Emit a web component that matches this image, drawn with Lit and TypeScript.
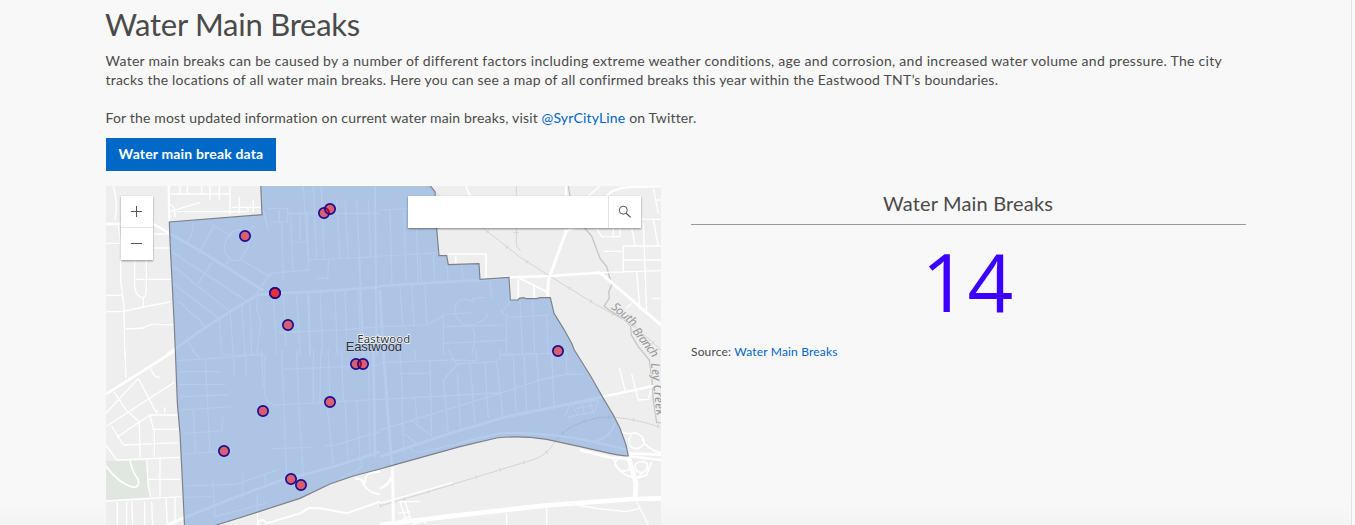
import { LitElement, html, svg, css } from "lit";
import { customElement } from "lit/decorators.js";

type Road = [d: string, width: number];

/* Map space is three units per pixel; each quadrant has its own origin. */
const NW: Road[] = [
  ["M206 18 208 126M18 132 160 132 M160 132 208 160", 7],
  ["M18 190H64M40 18Q56 80 44 120M55 130 62 200 62 300 72 380 74 525M18 346H64M18 395H68L130 381 210 366M104 240V320Q108 352 130 353 Q140 350 139 320V240M108 298H214M160 204H210M130 353V381M76 447 130 444Q155 428 180 434H222M160 162H206", 4],
  ["M212 42H390M390 18V104M208 75Q225 72 225 110M208 95 300 68M230 95H440M240 18V42M262 18V42M305 18V42M330 18V60M358 18V60M418 50V100M460 60V96M395 82H482M444 82V96", 4],
  ["M208 160 300 212 440 300 490 332M200 525 315 443 410 382 470 346 520 340 660 334 840 321", 8],
  ["M470 346Q480 320 512 280L625 270M216 215 432 358M222 260 390 395M222 312 355 414M230 365 Q250 370 262 390 L300 420 312 440M335 248 295 310M296 222 340 140M278 128Q282 160 262 184M338 135 390 165M395 160Q365 190 375 215 390 250 420 240 L445 200 Q450 160 420 150 395 152 390 162M375 260 388 240M424 240 510 290M450 145 462 138", 4],
  ["M490 90 505 150M505 85H563V126H508M538 90V126M565 100H840M572 100 578 270M600 103V180M622 95 626 270M572 186H622M627 240 840 230M545 130 550 300M650 295H683L686 240M610 18 625 240M640 18 650 235M664 18 672 235M710 60 720 235M735 60 745 235M770 60 778 232M805 60 812 230M550 345 558 500M590 345 600 525M660 335 668 525M705 332 712 525M735 330 740 480M775 328 780 470M475 350Q465 380 475 400L482 430 470 525M520 345 530 525M358 414 365 525M390 390 400 525M425 372 435 525M450 360 455 525M535 458 720 450 840 440M265 485 290 525", 3.5],
  ["M625 340 630 525M825 18 830 525M778 232 790 525", 6],
];
const NE: Road[] = [
  ["M0 90 165 82M0 228 177 218M30 90 36 318M72 90 78 310M108 90 115 315M0 440 140 435 200 402 280 398M280 360 278 365Q250 355 240 360L225 380Q222 420 255 435 290 438 315 415L325 398M120 230 125 312M160 225 165 310M200 255 205 308M245 255 250 305M330 300 335 355M190 440 380 435M190 490 380 480M190 402V525M278 440Q290 480 275 525M380 398V525M360 390 380 412 510 405M360 395Q385 385 388 360M420 360 428 525M458 358 464 525M500 405 505 525M60 320 68 435M95 318 102 435M135 318 140 435M275 360Q290 350 315 353", 3.5],
  ["M0 318 300 300 388 292 510 288 660 278M0 330 10 525", 8],
  ["M660 278 843 435M560 150 505 300 503 350M552 155 590 140", 9],
  ["M558 18V48M680 48Q700 25 740 22L843 18", 7],
  ["M205 222H318V296M227 228V250M258 18Q262 35 272 48M415 298V352M418 294 500 335M462 318V355M388 292V360", 5],
  ["M720 48V170H665L650 145M730 280V198H843M755 145 765 195M790 130 800 400M820 25 835 100M820 120 835 198M730 240H843M670 214H730M780 118H843M700 145V168M815 355H843M770 275 780 390M660 278 843 272M740 385 755 370M830 60H843M625 48 660 18", 4],
];
const SW: Road[] = [
  ["M18 132 130 62 225 2", 8],
  ["M150 55 165 80 180 82M18 190 115 85M20 228 222 98M115 85 170 190M42 125 80 182 118 215M75 0 78 85M35 228 70 285 235 278M50 262 150 195H232M150 195 160 238H235M18 285 50 330 240 322M118 215 120 322M163 240V320M172 188V180M194 188V172M140 330 145 410 152 440M18 453 245 440M145 388H240M180 322V440M52 455V525M80 455V525M95 455 98 525M134 455V525M155 455 158 525M198 445 202 525M225 442V525", 4],
  ["M90 330Q92 355 115 390 120 412 100 412 55 400 18 348", 5],
  ["M228 32 385 22 490 12M235 65H362M235 103H377M240 140 388 134M240 180 395 170M250 250 365 243 370 195M248 312 400 303M275 0 300 25M316 28 330 308M280 180 286 305M402 20V75M438 15V75M485 0 490 115M495 15V140Q505 165 530 165L840 148M545 58 840 45M368 15H488M338 390 345 500 500 460M245 408 410 403 535 358M252 442 340 438M428 370V440M496 375V410M472 435V525M512 296 635 292M675 287H700L840 245M720 384Q770 365 785 350V330M590 0 596 160M545 0 560 380M640 0 640 160M662 0 660 160M680 160 702 355M596 165 610 378M735 150 745 342M770 148 780 335M685 0 690 155M725 0 730 155M805 0 810 325", 3.5],
  ["M200 525 380 452 540 392 700 350 840 306M820 0 825 320", 8],
  ["M765 385 785 390 Q800 430 840 432M840 365Q790 365 795 400M475 525V512L490 510 500 520 600 490 625 475H660L740 490 840 455", 6],
];
const SE: Road[] = [
  ["M0 320 210 250 380 200 520 172 670 140M10 0 35 345M38 350 40 525", 9],
  ["M670 140 820 108M0 415Q28 405 34 380", 7],
  ["M0 240 360 130 480 90 560 72H610M0 148 190 138 365 128M0 38 205 30M95 212 160 262M60 0 68 145M60 70H150M150 30 155 260M105 145 112 220M205 0 230 45 190 90 205 245M228 42 350 35M232 70 242 235M270 42 285 220M315 38 325 205M350 35Q370 20 355 0M365 15 560 8M350 38 368 195M400 15 408 185M432 12 440 185M470 12 480 175M515 10 522 170M560 8V72M290 0V32L210 30M105 0V28M65 145 72 310M70 250 110 280M90 290Q92 310 130 305L240 280M555 198 570 165 655 150 645 185 560 202M575 165 595 198M605 160 615 195M630 155 640 190M590 175 640 165", 4],
  ["M240 278 360 250Q500 245 640 275 690 265 705 220M640 275 745 300", 6],
  ["M725 245Q745 255 765 248 800 260 790 285 770 305 750 288 740 270 755 255M700 325Q715 375 760 382M705 345Q705 320 735 325 760 340 745 360 720 370 705 345M765 345Q775 330 800 338 808 355 790 368 765 370 765 345M790 365 770 385 800 375 815 335M785 265Q800 300 843 308", 5],
  ["M745 310 843 314M740 318 843 330M600 300 690 323 745 325", 8],
  ["M745 318 768 400 765 445", 14],
  ["M0 525 200 500 500 466 760 447 843 445", 14],
  ["M0 460 220 397M380 490V525M500 470V525M590 465 650 475 740 485 780 475M770 455 805 525M718 52 735 122M755 72 775 150 805 148 812 120M55 455H120M60 455 80 518M75 455 95 515M55 490 90 485M65 508 90 500M130 510 140 525M95 525 150 505", 4],
];

const BOUNDARY =
  "M482 10 486 104 208 126 211 205 216 300 222 420 226 510 232 670 240 760 246 880 254 1045 320 1045 350 1035 470 997 600 955 690 912 760 888 840 867 875 857 1080 800 1190 774Q1260 766 1340 778L1440 800 1530 820Q1570 828 1585 828L1578 795 1560 745 1540 705 1510 655 1470 585 1423 510 1415 490 1390 445 1362 400 1351 353 1320 353 1310 356 1278 356 1270 353 1258 355 1254 360 1231 360 1227 292 1140 298 1137 251 1045 254 1040 227 1017 227 1010 145 1005 35 985 10Z";

const BREAKS = [
  [324, 213], [330, 209], [245, 236], [275, 293], [275, 293], [288, 325], [356, 364],
  [363, 364], [558, 351], [330, 402], [263, 411], [224, 451], [291, 479], [301, 485],
];

const roads = (list: Road[], x: number, y: number) => svg`
  <g transform="translate(${x} ${y})">${list.map(([d, w]) => svg`<path d=${d} stroke-width=${w} />`)}</g>`;

@customElement("break-map")
class BreakMap extends LitElement {
  static styles = css`
    :host { display: block; position: relative; width: 555px; height: 339px; overflow: hidden; background: #eee; }
    .canvas { display: block; width: 555px; height: 339px; }
    .road { fill: none; stroke: #fff; stroke-linejoin: round; }
    .rail { fill: none; stroke: #d5d5d5; stroke-width: 3; }
    .tick { fill: none; stroke: #d5d5d5; stroke-width: 12; stroke-dasharray: 3 72; }
    .creek { fill: none; stroke: #c6c6c6; stroke-width: 4; }
    .area { fill: rgba(110, 154, 220, 0.5); stroke: #7c8088; stroke-width: 3.5; }
    .dot { fill: rgba(255, 0, 0, 0.52); stroke: #1c0a90; stroke-width: 5; }
    .river { font: italic 36px "Noto Sans", sans-serif; fill: #969696; stroke: #eee; stroke-width: 4; paint-order: stroke; }
    .name { font: 39px "Liberation Sans", sans-serif; fill: #2d3036; stroke: #d4def0; stroke-width: 2; paint-order: stroke; }
    .place { font: 34px "Noto Sans", sans-serif; fill: #30343a; stroke: #fff; stroke-width: 4; paint-order: stroke; }
    .zoom { position: absolute; left: 15px; top: 10px; width: 32px; display: grid; grid-template-rows: 31px 33px; background: #fff; box-shadow: 0 1px 2px rgba(0, 0, 0, 0.4); }
    .key { display: grid; place-items: center; padding: 0 1px 0 0; }
    .key + .key { border-top: 1px solid #e4e4e4; padding-bottom: 1px; }
    .search { position: absolute; left: 302px; top: 10px; width: 233px; height: 32px; display: flex; background: #fff; box-shadow: 0 1px 2px rgba(0, 0, 0, 0.45); }
    .field { flex: 1; }
    .go { width: 32px; border-left: 1px solid #e4e4e4; display: grid; place-items: center; padding-bottom: 1px; }
    .icon { display: block; fill: none; stroke: #555; }
  `;

  render() {
    const rail = "M982 18 1045 68 1150 145 1258 230 1360 295 1490 375 1600 435 1683 510M840 978 990 934 1280 845Q1335 835 1365 785 1400 730 1500 712 1570 705 1683 742";
    return html`
      <svg class="canvas" viewBox="18 18 1665 1017">
        <path d="M18 842H139L142 910 152 950 18 962Z" fill="#e0e7e0" />
        <path class="rail" d=${rail} />
        <path class="tick" d=${rail} />
        <path class="rail" d="M1249 18V195Q1250 205 1262 212M1241 158H1257" />
        <path class="creek" d="M1405 18 1412 60 1450 140 1475 168 1500 235 1520 260 1535 315 1526 335 1528 355 1512 378 1535 395 1575 420 1592 438 1594 465 1615 500 1648 540 1656 600 1660 660 1670 728H1683" />
        <g class="road">${roads(NW, 0, 0)}${roads(NE, 840, 0)}${roads(SW, 0, 510)}${roads(SE, 840, 510)}</g>
        <path class="area" d=${BOUNDARY} />
        <text class="river" transform="translate(1532 384) rotate(40)" textLength="88">South</text>
        <text class="river" transform="translate(1596 454) rotate(52)" textLength="102">Branch</text>
        <text class="river" transform="translate(1653 550) rotate(84)" textLength="158">Ley Creek</text>
        ${BREAKS.map(([x, y]) => svg`<circle class="dot" cx=${(x - 100) * 3} cy=${(y - 180) * 3} r="15.5" />`)}
        <text class="name" x="737" y="512" textLength="169">Eastwood</text>
        <text class="place" x="772" y="489" textLength="159">Eastwood</text>
      </svg>
      <div class="zoom">
        <div class="key"><svg class="icon" width="11" height="11"><path d="M5.5 0V11M0 5.5H11" /></svg></div>
        <div class="key"><svg class="icon" width="11" height="11"><path d="M0 5.5H11" /></svg></div>
      </div>
      <div class="search">
        <div class="field"></div>
        <div class="go"><svg class="icon" width="14" height="14" viewBox="0 0 14 14"><circle cx="5.3" cy="5.2" r="4" /><path d="M8.2 8.2 12.6 12.4" stroke-width="1.3" /></svg></div>
      </div>`;
  }
}

@customElement("app-root")
class AppRoot extends LitElement {
  static styles = css`
    :host { display: block; height: 525px; overflow: hidden; background: #fafafa; font-family: Lato, sans-serif; color: #4a4a4a; }
    .page { box-sizing: border-box; width: 1352px; height: 525px; padding: 4px 105px 0 106px; border-right: 1px solid #e2e2e2; background: linear-gradient(#f8f8f8 500px, #f4f4f4 525px); }
    h1 { margin: 0; font-weight: 400; font-size: 31px; line-height: 40px; letter-spacing: -0.25px; text-indent: -1px; white-space: nowrap; }
    .copy { margin-top: 7px; font-size: 14px; line-height: 19px; white-space: nowrap; }
    .line { display: block; min-height: 19px; text-indent: -0.5px; }
    .first { letter-spacing: 0.285px; }
    .second { letter-spacing: 0.215px; }
    .third { letter-spacing: 0.165px; }
    .link { color: #0064c8; }
    .button { display: block; margin-top: 11px; width: 170px; height: 33px; line-height: 32px; text-align: center; background: #0069c7; color: #fff; font-size: 14px; font-weight: 700; letter-spacing: 0.17px; }
    .columns { display: grid; grid-template-columns: 555px 555px; column-gap: 30px; margin-top: 15px; }
    h2 { margin: 0; padding: 0 1px 5px 0; font-weight: 400; font-size: 20px; line-height: 34px; height: 33px; text-align: center; border-bottom: 1px solid #999; letter-spacing: 0.17px; }
    .count { margin-top: 11px; padding-right: 2px; font-family: "Open Sans", sans-serif; font-weight: 400; font-size: 80px; line-height: 90px; text-align: center; color: #3b00ff; }
    .source { margin-top: 17px; font-size: 12px; line-height: 18px; letter-spacing: 0.17px; }
  `;

  render() {
    return html`
      <main class="page">
        <h1>Water Main Breaks</h1>
        <div class="copy">
          <span class="line first">Water main breaks can be caused by a number of different factors including extreme weather conditions, age and corrosion, and increased water volume and pressure. The city</span>
          <span class="line second">tracks the locations of all water main breaks. Here you can see a map of all confirmed breaks this year within the Eastwood TNT’s boundaries.</span>
          <span class="line"></span>
          <span class="line third">For the most updated information on current water main breaks, visit <a class="link">@SyrCityLine</a> on Twitter.</span>
        </div>
        <a class="button">Water main break data</a>
        <div class="columns">
          <break-map></break-map>
          <section>
            <h2>Water Main Breaks</h2>
            <div class="count">14</div>
            <div class="source">Source: <a class="link">Water Main Breaks</a></div>
          </section>
        </div>
      </main>`;
  }
}
